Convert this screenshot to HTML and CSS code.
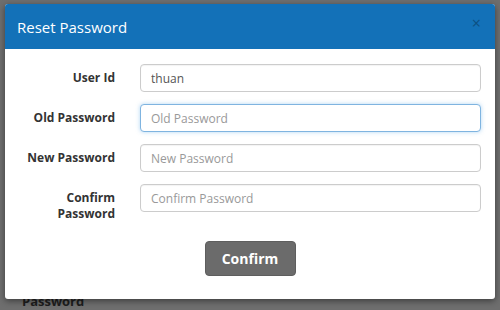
FILE: index.html
```html
<!DOCTYPE html>
<html>
<head>
<meta charset="utf-8">
<link rel="stylesheet" href="styles.css">
</head>
<body>
<div class="page">
  <div class="page-label">Password</div>
</div>
<div class="modal">
  <div class="modal-header">
    <span class="modal-title">Reset Password</span>
    <span class="close">×</span>
  </div>
  <div class="modal-body">
    <div class="row">
      <label class="label">User Id</label>
      <input class="input" type="text" value="thuan">
    </div>
    <div class="row">
      <label class="label">Old Password</label>
      <input class="input focus" type="text" placeholder="Old Password">
    </div>
    <div class="row">
      <label class="label">New Password</label>
      <input class="input" type="text" placeholder="New Password">
    </div>
    <div class="row">
      <label class="label">Confirm<br>Password</label>
      <input class="input" type="text" placeholder="Confirm Password">
    </div>
    <div class="actions">
      <button class="btn">Confirm</button>
    </div>
  </div>
</div>
</body>
</html>
```
FILE: styles.css
```css
* { box-sizing: border-box; }
html, body { margin: 0; padding: 0; }
body {
  width: 500px;
  height: 310px;
  overflow: hidden;
  background: #6e6e6e;
  font-family: "Open Sans", "Liberation Sans", sans-serif;
  position: relative;
}
.page {
  padding: 292px 0 0 22px;
}
.page-label {
  font-weight: 700;
  font-size: 13px;
  color: #1e1e1e;
}
.modal {
  position: absolute;
  left: 5px;
  top: 4px;
  width: 490px;
  background: #fff;
  border-radius: 3px;
  box-shadow: 0 2px 6px rgba(0,0,0,0.45);
  overflow: hidden;
}
.modal-header {
  height: 45px;
  background: #1371b8;
  display: flex;
  align-items: center;
  justify-content: space-between;
  padding: 0 14px 0 12px;
}
.modal-title {
  color: #fff;
  font-size: 15px;
}
.close {
  color: #0d4f82;
  font-size: 16px;
  margin-top: -8px;
}
.modal-body {
  padding: 15px 14px 23px 0;
}
.row {
  display: flex;
  align-items: flex-start;
  margin-bottom: 12px;
}
.label {
  width: 110px;
  text-align: right;
  font-weight: 700;
  font-size: 12px;
  line-height: 16px;
  color: #333;
  padding-top: 6px;
  margin-right: 25px;
}
.input {
  flex: 1;
  height: 28px;
  border: 1px solid #ccc;
  border-radius: 4px;
  padding: 0 10px;
  font-family: inherit;
  font-size: 12px;
  color: #555;
  outline: none;
  box-shadow: inset 0 1px 1px rgba(0,0,0,0.05);
}
.input::placeholder { color: #999; }
.input.focus {
  border-color: #7fb4e0;
  box-shadow: 0 0 4px rgba(102,175,233,0.5);
}
.actions {
  display: flex;
  justify-content: center;
  padding-top: 7px;
  padding-left: 14px;
}
.btn {
  width: 91px;
  height: 35px;
  background: #6b6b6b;
  border: 1px solid #5e5e5e;
  border-radius: 4px;
  color: #fff;
  font-family: inherit;
  font-weight: 700;
  font-size: 14px;
}
```
